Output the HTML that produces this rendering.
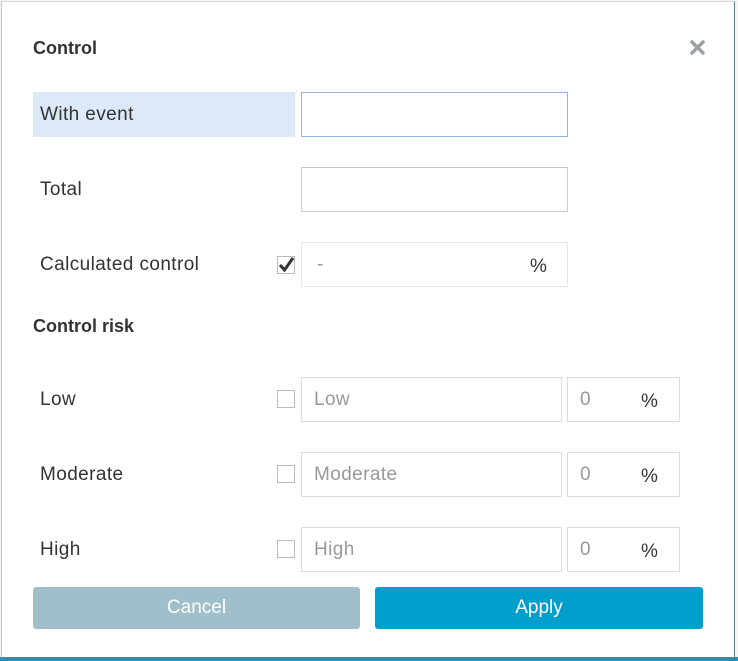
<!DOCTYPE html>
<html><head><meta charset="utf-8"><style>
*{box-sizing:border-box;margin:0;padding:0}
body{width:738px;height:661px;overflow:hidden;background:#f4f4f4;font-family:"Liberation Sans",sans-serif;position:relative}
.bottom{position:absolute;left:0;top:657px;width:738px;height:4px;background:#2a8fb0}
.dlg{position:absolute;left:1px;top:1px;width:734px;height:657px;background:#fff;border:1px solid #5a7f8c;border-top-color:#cfd8dc;border-left-color:#9db;}
.a{position:absolute}
.t{font-size:19px;color:#333;letter-spacing:0.4px}
.b{font-weight:bold;font-size:18px;color:#333}
.inp{position:absolute;border:1px solid #ddd;background:#fff}
.ph{position:absolute;font-size:19px;color:#999;letter-spacing:0.4px}
.cb{position:absolute;width:18px;height:18px;border:1px solid #bbb;background:#fff}
.btn{position:absolute;top:587px;height:42px;border-radius:3px;color:#fff;font-size:19px;text-align:center;line-height:42px}
</style></head><body>
<div class="bottom"></div>
<div class="dlg"></div>
<div class="a b" style="left:33px;top:38px">Control</div>
<svg class="a" style="left:690px;top:40px" width="15" height="15" viewBox="0 0 15 15"><path d="M2 2L13 13M13 2L2 13" stroke="#9aa0a4" stroke-width="3.5" stroke-linecap="round"/></svg>

<div class="a" style="left:33px;top:92px;width:262px;height:45px;background:#dce9f8"></div>
<div class="a t" style="left:40px;top:104px">With event</div>
<div class="inp" style="left:301px;top:92px;width:267px;height:45px;border-color:#8ab6e2"></div>

<div class="a t" style="left:40px;top:179px">Total</div>
<div class="inp" style="left:301px;top:167px;width:267px;height:45px;border-color:#ccc"></div>

<div class="a t" style="left:40px;top:254px">Calculated control</div>
<div class="cb" style="left:277px;top:256px"></div>
<svg class="a" style="left:277px;top:256px" width="18" height="18" viewBox="0 0 18 18"><path d="M3 9L7.5 14L16 2" stroke="#333" stroke-width="3" fill="none"/></svg>
<div class="inp" style="left:301px;top:242px;width:267px;height:45px;border-color:#e6e6e6"></div>
<div class="ph" style="left:317px;top:254px">-</div>
<div class="a t" style="left:530px;top:256px">%</div>

<div class="a b" style="left:33px;top:316px">Control risk</div>

<div class="a t" style="left:40px;top:389px">Low</div>
<div class="cb" style="left:277px;top:390px"></div>
<div class="inp" style="left:301px;top:377px;width:261px;height:45px"></div>
<div class="ph" style="left:314px;top:389px">Low</div>
<div class="inp" style="left:567px;top:377px;width:113px;height:45px"></div>
<div class="ph" style="left:580px;top:389px">0</div>
<div class="a t" style="left:641px;top:391px">%</div>

<div class="a t" style="left:40px;top:464px">Moderate</div>
<div class="cb" style="left:277px;top:465px"></div>
<div class="inp" style="left:301px;top:452px;width:261px;height:45px"></div>
<div class="ph" style="left:314px;top:464px">Moderate</div>
<div class="inp" style="left:567px;top:452px;width:113px;height:45px"></div>
<div class="ph" style="left:580px;top:464px">0</div>
<div class="a t" style="left:641px;top:466px">%</div>

<div class="a t" style="left:40px;top:539px">High</div>
<div class="cb" style="left:277px;top:540px"></div>
<div class="inp" style="left:301px;top:527px;width:261px;height:45px"></div>
<div class="ph" style="left:314px;top:539px">High</div>
<div class="inp" style="left:567px;top:527px;width:113px;height:45px"></div>
<div class="ph" style="left:580px;top:539px">0</div>
<div class="a t" style="left:641px;top:541px">%</div>

<div class="btn" style="left:33px;width:327px;background:#9fbfcb">Cancel</div>
<div class="btn" style="left:375px;width:328px;background:#009fcb">Apply</div>
</body></html>
